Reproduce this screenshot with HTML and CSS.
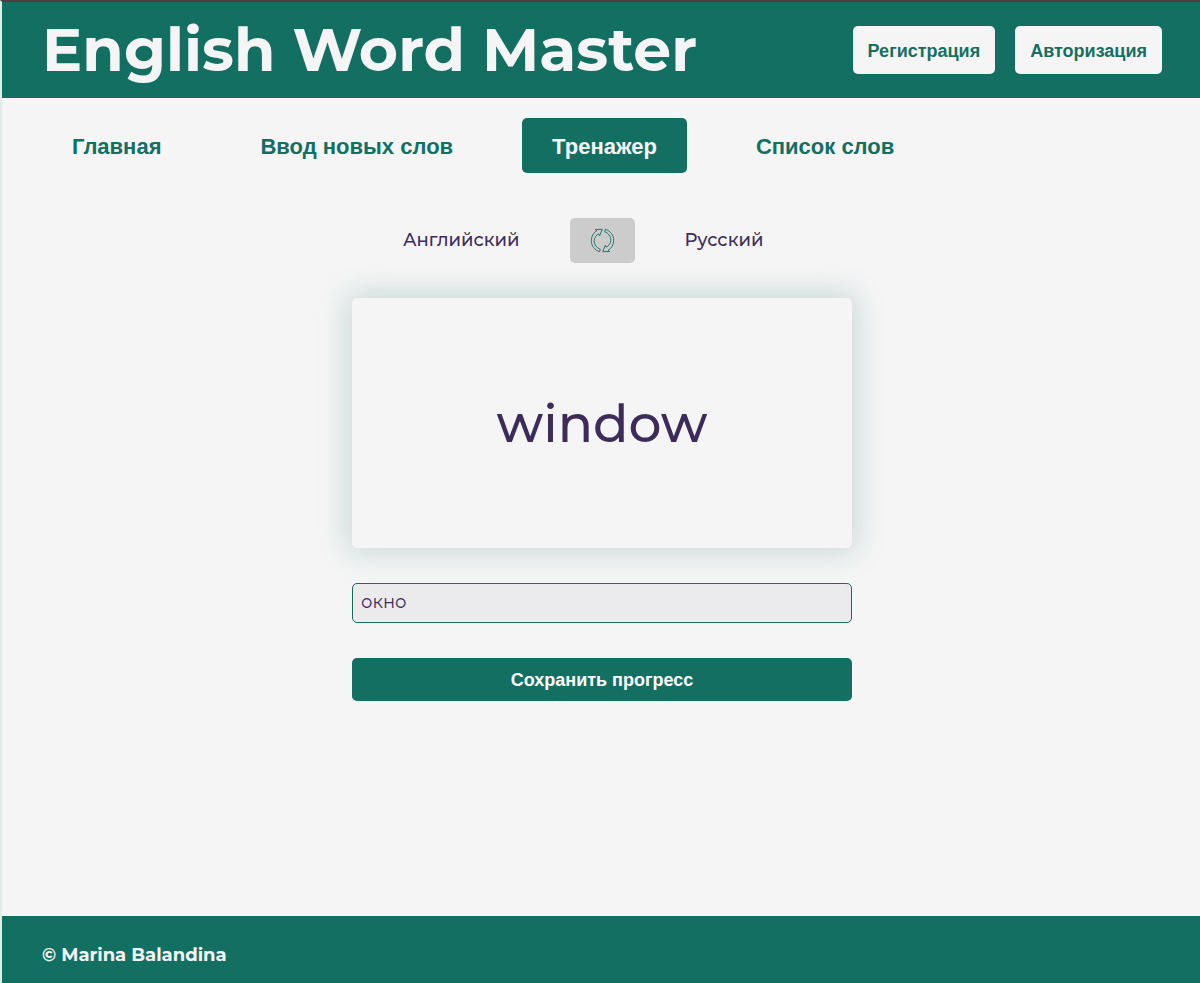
FILE: index.html
```html
<!DOCTYPE html>
<html lang="ru">
<head>
<meta charset="utf-8">
<meta name="viewport" content="width=device-width, initial-scale=1">
<title>English Word Master</title>
<link rel="stylesheet" href="styles.css">
</head>
<body>
<div class="page">
  <header class="header">
    <h1 class="header__title">English Word Master</h1>
    <div class="header__actions">
      <button class="header__button" type="button">Регистрация</button>
      <button class="header__button" type="button">Авторизация</button>
    </div>
  </header>
  <nav class="nav">
    <a class="nav__link" href="#home">Главная</a>
    <a class="nav__link" href="#add">Ввод новых слов</a>
    <a class="nav__link nav__link--active" href="#trainer" aria-current="page">Тренажер</a>
    <a class="nav__link" href="#list">Список слов</a>
  </nav>
  <main class="trainer">
    <div class="languages">
      <span class="languages__from">Английский</span>
      <button class="languages__swap" type="button" aria-label="Поменять языки">
        <svg width="25" height="25" viewBox="0 0 25 25" fill="none" stroke="currentColor" stroke-width="0.9" stroke-linejoin="round" aria-hidden="true">
          <path id="arrow" d="M10.3 21.2 L9.5 23.7 C4.5 22 1.3 17.8 1.3 12.6 C1.3 8.3 3.5 4.7 7 2.6 L5.3 1.5 L12.3 1.3 L9.6 7.8 L8.7 5.8 C6 7.3 4.2 9.8 4.2 12.8 C4.2 16.7 6.7 20 10.3 21.2 Z"/>
          <use href="#arrow" transform="rotate(180 12.5 12.5)"/>
        </svg>
      </button>
      <span class="languages__to">Русский</span>
    </div>
    <div class="card">window</div>
    <form class="answer">
      <input class="answer__input" type="text" value="окно" aria-label="Перевод">
      <button class="answer__save" type="button">Сохранить прогресс</button>
    </form>
  </main>
  <footer class="footer">© Marina Balandina</footer>
</div>
</body>
</html>
```
FILE: styles.css
```css
* {
  box-sizing: border-box;
}

body {
  margin: 0;
  background: #f5f5f5;
  color: #3d2c5b;
  font-family: Montserrat, Inter, sans-serif;
}

button,
.nav {
  font-family: "Liberation Sans", Arial, sans-serif;
  font-weight: 700;
}

button {
  border: 0;
  border-radius: 5px;
  cursor: pointer;
}

.page {
  display: flex;
  flex-direction: column;
  min-height: 100vh;
  border-top: 2px solid #55393c;
  border-left: 2px solid #e5eae9;
}

.header {
  display: flex;
  align-items: center;
  justify-content: space-between;
  gap: 20px;
  min-height: 96px;
  padding: 0 38px 0 40px;
  background: #146f63;
}

.header__title {
  margin: 0;
  color: #f5f5f5;
  font-size: 60px;
  font-weight: 700;
  line-height: 72px;
}

.header__actions {
  display: flex;
  gap: 20px;
}

.header__button {
  height: 48px;
  padding: 2px 15px 0;
  background: #f5f5f5;
  color: #146f63;
  font-size: 18px;
}

.nav {
  display: flex;
  gap: 39px;
  padding: 20px 40px 0;
  font-size: 22px;
  line-height: 27px;
}

.nav__link {
  padding: 15px 30px 13px;
  border-radius: 5px;
  color: #146f63;
  text-decoration: none;
}

.nav__link--active {
  background: #146f63;
  color: #f5f5f5;
}

.trainer {
  display: flex;
  flex: 1;
  flex-direction: column;
  align-items: center;
  gap: 35px;
  padding: 45px 20px 35px 22px;
}

.languages {
  display: grid;
  grid-template-columns: 1fr 65px 1fr;
  gap: 50px;
  align-items: center;
  width: 100%;
  font-size: 18px;
  font-weight: 500;
}

.languages__from,
.languages__to {
  padding-bottom: 2px;
}

.languages__from {
  text-align: right;
}

.languages__swap {
  display: flex;
  align-items: center;
  justify-content: center;
  height: 45px;
  padding: 0;
  background: #ccc;
  color: #146f63;
}

.card {
  display: flex;
  align-items: center;
  justify-content: center;
  width: 100%;
  max-width: 500px;
  min-height: 250px;
  border-radius: 5px;
  background: #f5f5f5;
  box-shadow: 0 0 30px 5px rgba(20, 111, 99, 0.2);
  font-size: 52px;
  font-weight: 500;
}

.answer {
  display: flex;
  flex-direction: column;
  gap: 35px;
  width: 100%;
  max-width: 500px;
}

.answer__input {
  height: 40px;
  padding: 0 8px 2px;
  border: 1px solid #146f63;
  border-radius: 5px;
  background: #ebebed;
  color: #3d2c5b;
  font: 18px Montserrat, Inter, sans-serif;
}

.answer__save {
  height: 43px;
  padding: 2px 15px 0;
  background: #146f63;
  color: #fff;
  font-size: 18px;
}

.footer {
  padding: 25px 40px 14px;
  background: #146f63;
  color: #f5f5f5;
  font-size: 18px;
  font-weight: 700;
  line-height: 28px;
}
```
